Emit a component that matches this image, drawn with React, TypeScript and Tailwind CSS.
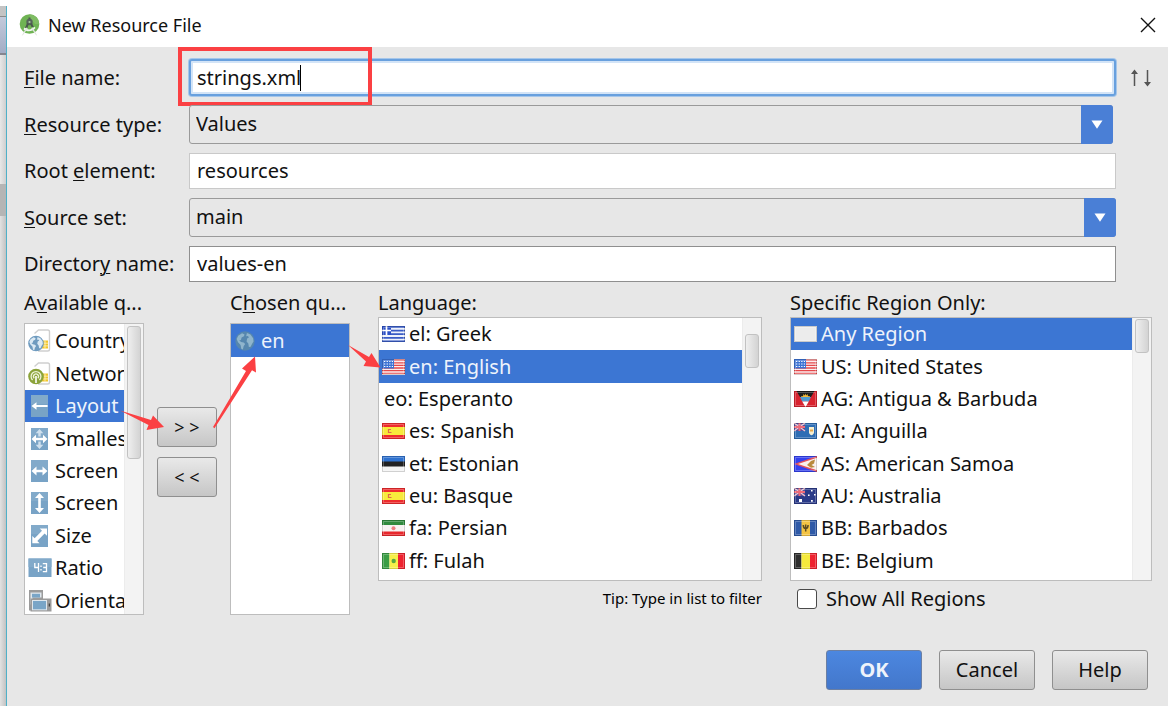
import type { ReactNode } from "react";

function StudioLogo() {
  return (
    <svg className="h-[22px] w-[21px] shrink-0" viewBox="0 0 20 22" aria-hidden="true">
      <circle cx="10" cy="10" r="9.8" fill="#6fb353" />
      <path d="M10 .3a9.700 9.700 0 0 1 9.700 9.700h-4L10 4z" fill="#7fbc63" />
      <path d="M9 3.500h2v3H9z" fill="#4a574d" />
      <circle cx="10" cy="8" r="3.200" fill="#56645a" />
      <path d="M7.600 9 5.400 14h2.400l1.600-4zM12.400 9l2 4h-2.400l-1.400-3z" fill="#4a574d" />
      <circle cx="10" cy="8" r="1.100" fill="#a9c7a0" />
      <path d="M5.200 13.600c2.800 2.600 6.800 2.600 9.600-.9l1.200 1.300c-3.400 4-8.600 4.200-12 1.200z" fill="#f3f7f1" />
      <path d="M6.800 13.500 3 20.200l-.8 1.800 1.800-1.400 4.300-6.400zM13.200 13.500l3.800 6.700.8 1.800-1.800-1.400-4.300-6.400z" fill="#dfe5dd" />
    </svg>
  );
}

function GlobeShape({ cx, cy, r, sea, land }: { cx: number; cy: number; r: number; sea: string; land: string }) {
  const k = r / 10;
  return (
    <g transform={`translate(${cx - r} ${cy - r}) scale(${k})`}>
      <circle cx="10" cy="10" r="10" fill={sea} />
      <path
        d="M3 4.500 7 2l2.500 1.200-.6 2-2.400 1.300L5.800 9 4 9.400 6 11l2.600.6 1.600 1.600-1.600 2.200-.8 3.400-1.600-.8-.8-4-2.600-2.600L1.400 8zM12 1.800l3.600 1.400 2.800 4 .4 3.400-1.600 2.400-1.400 3-1.800.2-.6-3.600-1.800-2.200.6-3 2-1.200-1.400-1.400-1.600.4z"
        fill={land}
      />
    </g>
  );
}

function SimBase({ children }: { children: ReactNode }) {
  return (
    <svg className="h-6 w-6" viewBox="0 0 24 24" aria-hidden="true">
      <path d="M6.500 4.500 10.500 1h9.200c1 0 1.800.8 1.800 1.800v17.400c0 1-.8 1.800-1.800 1.800H10" fill="#fff" stroke="#cfcfcf" strokeWidth="1.400" />
      <path d="M14 11.500h6v8h-6z" fill="#f0c52c" />
      <path d="M14 14.200h6M14 16.900h6M17 11.500v8" stroke="#fff5c4" strokeWidth=".8" />
      {children}
    </svg>
  );
}

function Tile({ children }: { children: ReactNode }) {
  return (
    <svg className="h-6 w-6" viewBox="0 0 24 24" aria-hidden="true">
      <path d="M3 1h17v22H3z" fill="#78a3c6" />
      <path d="M3 1h17v9H3z" fill="#82aaca" />
      <g fill="#fff">{children}</g>
    </svg>
  );
}

const icons: Record<string, ReactNode> = {
  country: (
    <SimBase>
      <GlobeShape cx={8} cy={14.5} r={7.8} sea="#6f9bbf" land="#dbe9f3" />
    </SimBase>
  ),
  network: (
    <SimBase>
      <circle cx="8" cy="14.5" r="7.800" fill="#8ba33a" />
      <path d="M4.600 18a4.900 4.900 0 1 1 6.800 0M6.200 16.200a2.500 2.500 0 1 1 3.600 0" fill="none" stroke="#eef3d8" strokeWidth="1.300" />
      <path d="M7.200 14h1.600v7H7.200z" fill="#fff" />
    </SimBase>
  ),
  layout: (
    <Tile>
      <path d="m3.500 12 5-3.800v2.700h11.100v2.200H8.500v2.700z" />
    </Tile>
  ),
  smallest: (
    <Tile>
      <path d="m11.500 2 3.800 4.200h-2.600v3.400h-2.400V6.200H7.700zM11.500 22l3.800-4.200h-2.600v-3.400h-2.400v3.400H7.700z" fill="#cfe0ee" />
      <path d="m3.500 12 4.500-4.200v3h7V7.800l4.500 4.200-4.500 4.200v-3H8v3z" />
    </Tile>
  ),
  width: (
    <Tile>
      <path d="m3.500 12 5-4.500v3.200h6V7.500l5 4.500-5 4.500v-3.200h-6v3.200z" />
    </Tile>
  ),
  height: (
    <Tile>
      <path d="m11.500 2 4.500 5h-3.200v10H16l-4.500 5L7 17h3.200V7H7z" />
    </Tile>
  ),
  size: (
    <Tile>
      <path d="M19 4.500v7.300L16.600 9.500 9.300 17l2.300 2.300H4.300V12l2.400 2.300L14 6.800l-2.300-2.300z" />
    </Tile>
  ),
  ratio: (
    <svg className="h-6 w-6" viewBox="0 0 24 24" aria-hidden="true">
      <path d="M.5 2.500h23v18.500H.5z" fill="#78a3c6" />
      <path d="M.5 2.500h23V11H.5z" fill="#82aaca" />
      <path d="M6.800 7v4.500h3.700M10.500 7v9M13 9.500v1.600M13 13v1.600M14.800 7.600h3.700v8h-3.700M15.200 11.500h3.300" fill="none" stroke="#fff" strokeWidth="1.300" />
    </svg>
  ),
  orientation: (
    <svg className="h-6 w-6" viewBox="0 0 24 24" aria-hidden="true">
      <path d="M1 1h14v20.500H1z" fill="#9b9b9b" />
      <path d="M2.500 3.500h11v5h-9v7h-2z" fill="#dfe7ed" />
      <path d="M4 4.800h8v3.700H4z" fill="#79a5c7" />
      <path d="M2.500 9.500h21v13h-21z" fill="#9b9b9b" />
      <path d="M4 11h15v10.300H4z" fill="#dfe7ed" />
      <path d="M5 12h13v8.300H5z" fill="#79a5c7" />
      <path d="M20.700 14.500h1.300v3h-1.300z" fill="#444" />
    </svg>
  ),
};

const stripesUS = (
  <>
    <path d="M0 0h23v16H0z" fill="#fbeeee" />
    <path d="M0 1.200h23M0 3.800h23M0 6.400h23M0 9h23M0 11.600h23M0 14.400h23" stroke="#e5484b" strokeWidth="1.300" />
    <path d="M0 0h12v9.500H0z" fill="#3b72d4" />
    <path d="M2 2.500h9M2 5h9M2 7.500h9" stroke="#fff" strokeWidth="1.200" strokeDasharray="1.300 1.300" />
  </>
);

const spain = (
  <>
    <path d="M0 0h23v16H0z" fill="#ee2b2d" />
    <path d="M0 4h23v8H0z" fill="#f8ea3c" />
    <path d="M6 6.500h3M6 9.500h3.500M6.500 6v4" stroke="#e0694a" strokeWidth="1.200" />
  </>
);

const jackCanton = (
  <>
    <path d="M0 0h11v8H0z" fill="#51509c" />
    <path d="m0 0 11 8M11 0 0 8" stroke="#f2c3cc" strokeWidth="1.400" />
    <path d="M5.500 0v8M0 4h11" stroke="#ee6a78" strokeWidth="2" />
  </>
);

const flags: Record<string, ReactNode> = {
  greece: (
    <>
      <path d="M0 0h23v16H0z" fill="#eef2fb" />
      <path d="M0 1h23M0 4.600h23M0 8.200h23M0 11.800h23M0 15.200h23" stroke="#3a5cc5" strokeWidth="1.800" />
      <path d="M0 0h9v9H0z" fill="#2c50c6" />
      <path d="M4.500 0v9M0 4.500h9" stroke="#fff" strokeWidth="1.700" />
    </>
  ),
  us: stripesUS,
  spain,
  estonia: (
    <>
      <path d="M0 0h23v6H0z" fill="#2f72cf" />
      <path d="M0 5.500h23v5.500H0z" fill="#222" />
      <path d="M0 10.500h23V16H0z" fill="#f3f3f3" />
    </>
  ),
  iran: (
    <>
      <path d="M0 0h23v16H0z" fill="#f7f2f2" />
      <path d="M0 0h23v5H0z" fill="#318a3e" />
      <path d="M0 11.500h23V16H0z" fill="#e8282d" />
      <circle cx="11.500" cy="8.200" r="2" fill="#ee7f82" />
    </>
  ),
  senegal: (
    <>
      <path d="M0 0h7.500v16H0z" fill="#3a9d45" />
      <path d="M7.500 0h8.500v16H7.500z" fill="#f6ef49" />
      <path d="M16 0h7v16h-7z" fill="#ee2330" />
      <circle cx="11.700" cy="8" r="2.200" fill="#5aa83f" />
    </>
  ),
  blank: <path d="M0 0h23v16H0z" fill="#ececec" />,
  antigua: (
    <>
      <path d="M0 0h23v16H0z" fill="#d8232f" />
      <path d="M2.500 0h18l-3.500 6H6z" fill="#1d1d1d" />
      <path d="m7 5 2 .2L9.500 3l1.300 1.400.7-2 .7 2L13.500 3l.5 2.200 2-.2-1 2H8z" fill="#f1b93a" />
      <path d="M6 6h11l-2.200 4.500H8.200z" fill="#4f9bd0" />
      <path d="M8.200 10.500h6.600L11.500 16z" fill="#fff" />
    </>
  ),
  anguilla: (
    <>
      <path d="M0 0h23v16H0z" fill="#2e6db4" />
      {jackCanton}
      <path d="M15 4h5v5.500c0 1.500-1.500 2.500-2.500 2.800-1-.3-2.500-1.300-2.500-2.800z" fill="#f7f0d2" />
      <path d="M16 6.500h3v2h-3z" fill="#e9a94c" />
    </>
  ),
  samoa: (
    <>
      <path d="M0 0h23v16H0z" fill="#3340ee" />
      <path d="M23 0v16L0 8z" fill="#e2525a" />
      <path d="M23 1.800v12.400L4 8z" fill="#f8efec" />
      <path d="m13 9 4-4 4-1.500-1 4-2.500 1.500 3.500 2-4 .8z" fill="#b98a3c" />
    </>
  ),
  australia: (
    <>
      <path d="M0 0h23v16H0z" fill="#2a3a88" />
      {jackCanton}
      <path d="M5 11h3v3H5zM17 2h1.600v1.600H17zM14 6.500h1.600v1.600H14zM20 6h1.600v1.600H20zM17 12h1.800v1.800H17z" fill="#fff" />
    </>
  ),
  barbados: (
    <>
      <path d="M0 0h23v16H0z" fill="#2f5aa8" />
      <path d="M7.500 0h8.500v16H7.500z" fill="#f5c443" />
      <path d="M9.300 5c0 2.500.9 3.500 2.400 3.500s2.400-1 2.400-3.500M11.700 4.500V11.500" fill="none" stroke="#5d4c22" strokeWidth="1.500" />
    </>
  ),
  belgium: (
    <>
      <path d="M0 0h7.500v16H0z" fill="#2e2e2e" />
      <path d="M7.500 0h8.500v16H7.500z" fill="#f6ea3c" />
      <path d="M16 0h7v16h-7z" fill="#ee2330" />
    </>
  ),
};

function Flag({ name }: { name: string }) {
  return (
    <svg className="h-4 w-[23px] shrink-0" viewBox="0 0 23 16" aria-hidden="true">
      {flags[name]}
      <path d="M.5.5h22v15H.5z" fill="none" stroke="#000" strokeOpacity=".14" />
      <path d="M1.500 1.500h20v13h-20z" fill="none" stroke="#fff" strokeOpacity=".25" />
    </svg>
  );
}

function Track({ thumb }: { thumb: string }) {
  return (
    <div className="w-[19px] shrink-0 border-l border-[#ececec] bg-[#f3f3f3] px-[2px]">
      <div className={"rounded-[3px] border border-[#c2c2c2] bg-linear-to-r from-[#efefef] to-[#d3d3d3] " + thumb} />
    </div>
  );
}

type Item = { icon: string | null; label: string; selected?: boolean };

const available: Item[] = [
  { icon: "country", label: "Country" },
  { icon: "network", label: "Networ" },
  { icon: "layout", label: "Layout", selected: true },
  { icon: "smallest", label: "Smalles" },
  { icon: "width", label: "Screen" },
  { icon: "height", label: "Screen" },
  { icon: "size", label: "Size" },
  { icon: "ratio", label: "Ratio" },
  { icon: "orientation", label: "Orienta" },
];

const languages: Item[] = [
  { icon: "greece", label: "el: Greek" },
  { icon: "us", label: "en: English", selected: true },
  { icon: null, label: "eo: Esperanto" },
  { icon: "spain", label: "es: Spanish" },
  { icon: "estonia", label: "et: Estonian" },
  { icon: "spain", label: "eu: Basque" },
  { icon: "iran", label: "fa: Persian" },
  { icon: "senegal", label: "ff: Fulah" },
];

const regions: Item[] = [
  { icon: "blank", label: "Any Region", selected: true },
  { icon: "us", label: "US: United States" },
  { icon: "antigua", label: "AG: Antigua & Barbuda" },
  { icon: "anguilla", label: "AI: Anguilla" },
  { icon: "samoa", label: "AS: American Samoa" },
  { icon: "australia", label: "AU: Australia" },
  { icon: "barbados", label: "BB: Barbados" },
  { icon: "belgium", label: "BE: Belgium" },
];

function rowTone(selected?: boolean) {
  return selected ? "bg-[#3c76d3] text-[#eef3fb]" : "text-[#111]";
}

function FlagList({ items, thumb, labelledBy }: { items: Item[]; thumb: string; labelledBy: string }) {
  return (
    <div className="flex h-[264px] border border-[#bdbdbd] bg-white">
      <ul role="listbox" aria-labelledby={labelledBy} className="flex min-w-0 flex-1 flex-col pb-[3px]">
        {items.map((item) => (
          <li
            key={item.label}
            role="option"
            aria-selected={!!item.selected}
            className={"flex flex-1 items-center gap-1 pl-[3px] leading-8 whitespace-nowrap " + rowTone(item.selected)}
          >
            {item.icon && <Flag name={item.icon} />}
            <span className={item.icon ? "" : "pl-[2px]"}>{item.label}</span>
          </li>
        ))}
      </ul>
      <Track thumb={thumb} />
    </div>
  );
}

function Caption({ id, tall, children }: { id: string; tall?: boolean; children: ReactNode }) {
  return (
    <div id={id} className={"pt-[6px] leading-[29px] whitespace-nowrap " + (tall ? "pb-[6px]" : "")}>
      {children}
    </div>
  );
}

function U({ children }: { children: ReactNode }) {
  return <span className="underline decoration-1 underline-offset-2">{children}</span>;
}

function SelectBox({ id, value, box }: { id: string; value: string; box: string }) {
  return (
    <div className={"relative flex h-[39px] " + box}>
      <select
        id={id}
        defaultValue={value}
        className="w-full appearance-none rounded-[3px] border border-[#9a9a9a] bg-[#e7e7e7] pb-[2px] pl-[6px] text-[#111]"
      >
        <option>{value}</option>
      </select>
      <span className="pointer-events-none absolute inset-y-0 right-0 flex w-8 items-center justify-center rounded-r-[3px] bg-[#4a7fd6]">
        <svg className="h-[9px] w-3" viewBox="0 0 12 9" aria-hidden="true">
          <path d="M.5.5h11L6 8.800z" fill="#fff" />
        </svg>
      </span>
    </div>
  );
}

const formRow = "grid grid-cols-[165px_1fr_36px] items-center";
const plainButton = "rounded-[3px] border border-[#8f8f8f] bg-linear-to-b from-[#e9e9e9] to-[#c6c6c6] text-[#111]";

export default function App() {
  return (
    <div className="flex bg-white pt-[6px] pr-[2px] font-['Noto_Sans',sans-serif] text-[20px] text-[#111]">
      <div className="flex w-[6px] shrink-0 flex-col" aria-hidden="true">
        <div className="h-[11px] border-b border-[#8a8a8a] bg-[#c4c4c4]" />
        <div className="h-[38px] border-b-2 border-[#85858f] bg-linear-to-b from-[#c3cadb] to-[#a3adc6]" />
        <div className="h-[129px] bg-linear-to-r from-[#e8e8e8] to-[#cfcfcf]" />
        <div className="h-8 bg-[#b5b5b5]" />
        <div className="flex-1 bg-linear-to-r from-[#e2e2e2] to-[#c2c2c2]" />
      </div>

      <div className="min-w-0 flex-1 border-l border-[#4fb0c8] bg-[#e7e7e7]">
        <header className="flex h-[41px] items-center gap-2 bg-white pr-[12px] pb-[3px] pl-3">
          <StudioLogo />
          <h1 className="flex-1 text-[18px]">New Resource File</h1>
          <button type="button" aria-label="Close" className="flex h-4 w-4 items-center justify-center">
            <svg className="h-4 w-4" viewBox="0 0 16 16" aria-hidden="true">
              <path d="m1 1 14 14M15 1 1 15" stroke="#111" strokeWidth="1.400" />
            </svg>
          </button>
        </header>

        <form className="pt-[12px] pr-4 pb-4 pl-[17px]" onSubmit={(e) => e.preventDefault()}>
          <div className="flex flex-col gap-[9px]">
            <div className={"relative " + formRow}>
              <label htmlFor="file-name">
                <U>F</U>ile name:
              </label>
              <div className="relative flex">
                <input
                  id="file-name"
                  defaultValue="strings.xml"
                  className="h-[37px] w-full rounded-[3px] border-2 border-[#68a0de] bg-white pl-[6px] shadow-[0_0_0_1px_#a5c6ea,inset_0_0_0_2px_#d3e4f7] outline-none"
                />
                <span className="absolute top-[6px] left-[111px] h-[26px] w-px bg-black" />
              </div>
              <button type="button" aria-label="Swap order" className="flex justify-end">
                <svg className="h-[18px] w-[22px]" viewBox="0 0 22 18" aria-hidden="true">
                  <path d="M4.500 17V2M17.500 1v15" stroke="#555" strokeWidth="1.500" />
                  <path d="M4.500 .5 8 5H1zM17.500 17.500 21 13h-7z" fill="#555" />
                </svg>
              </button>
              <span className="pointer-events-none absolute top-[-12px] left-[154px] h-[59px] w-[194px] border-4 border-[#fb4043]" />
            </div>

            <div className={formRow}>
              <label htmlFor="resource-type">
                <U>R</U>esource type:
              </label>
              <SelectBox id="resource-type" value="Values" box="mr-[3px]" />
            </div>

            <div className={formRow}>
              <label htmlFor="root-element">
                Root <U>e</U>lement:
              </label>
              <input
                id="root-element"
                defaultValue="resources"
                className="h-9 w-full border border-[#c9c9c9] bg-white pb-[2px] pl-[7px]"
              />
            </div>

            <div className={formRow}>
              <label htmlFor="source-set">
                <U>S</U>ource set:
              </label>
              <SelectBox id="source-set" value="main" box="" />
            </div>

            <div className={formRow}>
              <label htmlFor="directory-name">
                Director<U>y</U> name:
              </label>
              <input
                id="directory-name"
                defaultValue="values-en"
                className="h-9 w-full border border-[#8f8f8f] bg-white pb-[2px] pl-[7px]"
              />
            </div>
          </div>

          <div className="relative flex">
            <section className="w-[120px] shrink-0">
              <Caption id="available-caption" tall>
                A<U>v</U>ailable q...
              </Caption>
              <div className="flex h-[292px] overflow-hidden border border-[#bdbdbd] bg-white">
                <ul role="listbox" aria-labelledby="available-caption" className="flex h-[293px] min-w-0 flex-1 flex-col pt-px">
                  {available.map((item, i) => (
                    <li
                      key={i}
                      role="option"
                      aria-selected={!!item.selected}
                      className={
                        "flex flex-1 items-center gap-[3px] overflow-hidden pl-[3px] leading-8 whitespace-nowrap " +
                        rowTone(item.selected)
                      }
                    >
                      <span className="shrink-0">{item.icon && icons[item.icon]}</span>
                      <span>{item.label}</span>
                    </li>
                  ))}
                </ul>
                <Track thumb="mt-[2px] h-[133px]" />
              </div>
            </section>

            <div className="flex w-[86px] shrink-0 flex-col gap-[10px] px-[13px] pt-[125px] text-[18px]">
              <button type="button" className={"h-10 " + plainButton}>
                &gt; &gt;
              </button>
              <button type="button" className={"h-10 " + plainButton}>
                &lt; &lt;
              </button>
            </div>

            <section className="w-[120px] shrink-0">
              <Caption id="chosen-caption" tall>
                C<U>h</U>osen qu...
              </Caption>
              <ul role="listbox" aria-labelledby="chosen-caption" className="h-[292px] border border-[#bdbdbd] bg-white">
                <li role="option" aria-selected className={"flex h-[33px] items-center gap-[6px] pl-1 " + rowTone(true)}>
                  <svg className="h-5 w-5" viewBox="0 0 20 20" aria-hidden="true">
                    <GlobeShape cx={10} cy={10} r={9.7} sea="#5687ae" land="#8fb5cc" />
                  </svg>
                  en
                </li>
              </ul>
            </section>

            <section className="ml-7 min-w-0 flex-[384]">
              <Caption id="language-caption">Language:</Caption>
              <FlagList items={languages} labelledBy="language-caption" thumb="mt-[16px] h-[34px]" />
              <p className="pt-[6px] text-right text-[15px] leading-[22px] text-black">Tip: Type in list to filter</p>
            </section>

            <section className="ml-7 min-w-0 flex-[362]">
              <Caption id="region-caption">Specific Region Only:</Caption>
              <FlagList items={regions} labelledBy="region-caption" thumb="mt-px h-[34px]" />
              <label className="flex items-center gap-[9px] pt-[3px] pl-[7px] leading-[30px]">
                <input
                  type="checkbox"
                  className="h-5 w-5 appearance-none rounded-[3px] border border-[#4a4a4a] bg-white"
                />
                Show All Regions
              </label>
            </section>

            <svg
              className="pointer-events-none absolute top-0 left-0 h-[160px] w-[360px]"
              viewBox="0 0 360 160"
              aria-hidden="true"
              fill="#fb4043"
            >
              <path d="m96 128.500 31 9.500 2-4.500 11 11.500-17.500 3 2-5z" />
              <path d="m189 145 33-56-4-2.500L231 74.500l1 16-4-2.200-37.500 58z" />
              <path d="m324 63 21 12 2.500-4 9 14.500-17-1.500 2.500-4.500z" />
            </svg>
          </div>

          <footer className="flex justify-end gap-[17px] pt-[35px] pr-1">
            <button
              type="submit"
              className="h-10 w-24 rounded-[3px] border border-[#6b7fa3] bg-linear-to-b from-[#4c87e0] to-[#4377cb] font-bold text-[#eef3fb]"
            >
              OK
            </button>
            <button type="button" className={"h-10 w-24 " + plainButton}>
              Cancel
            </button>
            <button type="button" className={"h-10 w-24 " + plainButton}>
              Help
            </button>
          </footer>
        </form>
      </div>
    </div>
  );
}
